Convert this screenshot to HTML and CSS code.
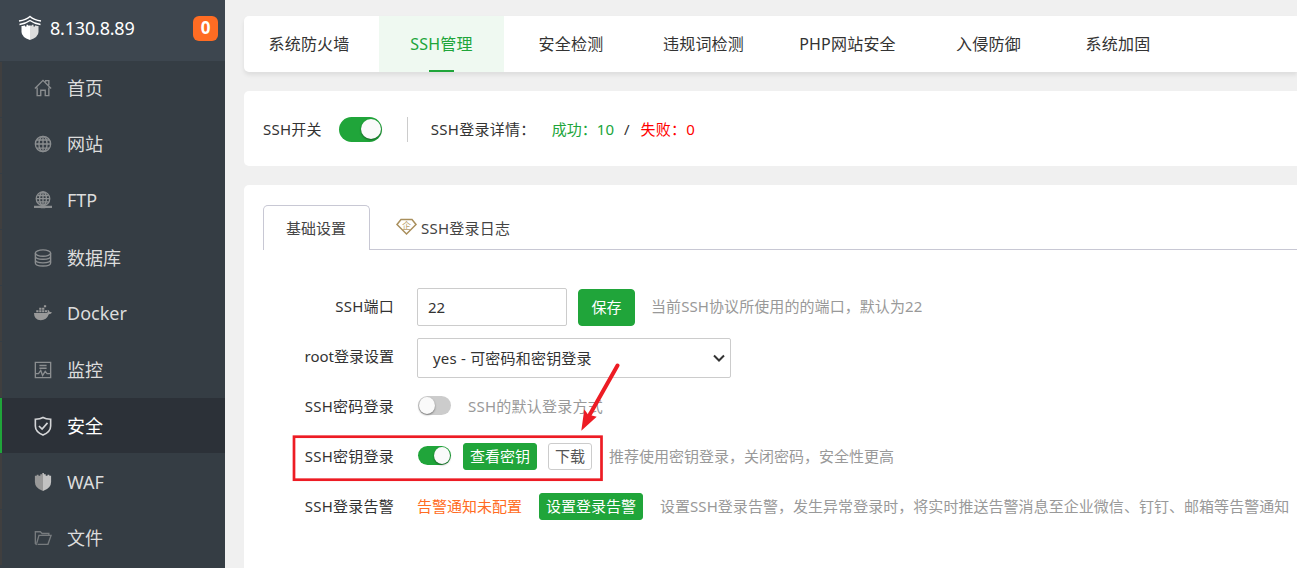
FILE: index.html
```html
<!DOCTYPE html>
<html lang="zh-CN">
<head>
    <meta charset="UTF-8">
    <meta name="viewport" content="width=device-width, initial-scale=1.0">
    <title>安全 - SSH管理</title>
    <link rel="stylesheet" href="styles.css">
</head>
<body>
    <div class="sidebar">
        <div class="server">
            <svg class="logo" width="24" height="26" viewBox="0 0 24 26">
                <path d="M1 6Q8 5 12 1.500Q16 5 23 6M1.500 9.500Q8 8.500 12 5.500Q16 8.500 22.500 9.500" fill="none" stroke="#fff" stroke-width="1.400"/>
                <path d="M3.500 11H5.500V10.500H7V11.500H8.500V9.800H10V10.500H12V25Q3.500 22 3.500 17Z" fill="#fff"/>
                <path d="M20.500 11H18.500V10.500H17V11.500H15.500V9.800H14V10.500H12V25Q20.500 22 20.500 17Z" fill="#ddd"/>
            </svg>
            <span class="ip">8.130.8.89</span>
            <span class="count">0</span>
        </div>
        <ul class="menu">
            <li class="up">
                <svg viewBox="0 0 20 20"><path d="M1 10.500L10 1.500L19 10.500M3.500 9.500V18.500H7.500V12.500H12.500V18.500H16.500V9.500M13 3V1.800H16.500V7"/></svg>
                首页
            </li>
            <li class="up">
                <svg viewBox="0 0 20 20"><circle cx="10" cy="10" r="8.500"/><ellipse cx="10" cy="10" rx="4.500" ry="8.500"/><path d="M10 1.500V18.500M1.500 10H18.500M3 5.500H17M3 14.500H17"/></svg>
                网站
            </li>
            <li class="up">
                <svg viewBox="0 0 20 20"><circle cx="10" cy="8.500" r="7.500"/><ellipse cx="10" cy="8.500" rx="3.800" ry="7.500"/><path d="M10 1V18M2.500 8.500H17.500M4 5H16M4 12H16"/><path d="M0 17.500H20M7.500 18H12.500" stroke-width="2.500"/></svg>
                FTP
            </li>
            <li>
                <svg viewBox="0 0 20 20"><ellipse cx="10" cy="4.500" rx="8.500" ry="3.500"/><path d="M1.500 4.500V15.500C1.500 20 18.500 20 18.500 15.500V4.500M1.500 8C1.500 12.500 18.500 12.500 18.500 8M1.500 12C1.500 16.500 18.500 16.500 18.500 12"/></svg>
                数据库
            </li>
            <li class="docker">
                <svg viewBox="0 0 20 20"><path class="solid" d="M0 10H14.500Q16 9 15 6.500Q17 7 17.500 9Q19 8.500 20 9.500Q19 11.500 16.500 11.500Q14 18 7.500 18Q0 18 0 10ZM2.500 7H5V9.300H2.500ZM5.800 7H8.300V9.300H5.800ZM9 7H11.500V9.300H9ZM12.200 7H14.500V9.300H12.200ZM5.800 4.200H8.300V6.300H5.800ZM9 4.200H11.500V6.300H9ZM11 1.500H13.500V3.500H11Z"/></svg>
                Docker
            </li>
            <li>
                <svg viewBox="0 0 20 20"><path d="M1.500 1.500H18.500V18.500H1.500ZM6 5H14M6 8H14M2 14H5L7.500 10.500L9.500 16L12.500 11.500L14.500 14H18"/></svg>
                监控
            </li>
            <li class="active">
                <svg viewBox="0 0 20 20"><path d="M10 0.500Q13 2.200 18.500 2.500V10Q18.500 16.500 10 20Q1.500 16.500 1.500 10V2.500Q7 2.200 10 0.500ZM5.500 10L9 13.500L15 6.500"/></svg>
                安全
            </li>
            <li>
                <svg viewBox="0 0 20 20"><path class="solid" d="M10 0V20Q1 17 1 10V3H3V2H5V3H7V1.500H9V0Z"/><path class="light" d="M10 0V20Q19 17 19 10V3H17V2H15V3H13V1.500H11V0Z"/></svg>
                WAF
            </li>
            <li>
                <svg class="thin" viewBox="0 0 20 20"><path d="M4 17H15.500L19 7H5.500L3 16M3 17.500L1.500 16V3H7L9 5H16.500V7"/></svg>
                文件
            </li>
        </ul>
    </div>

    <div class="main">
        <div class="tabs">
            <div class="tab tab-firewall">系统防火墙</div>
            <div class="tab tab-ssh on">SSH管理</div>
            <div class="tab tab-check">安全检测</div>
            <div class="tab tab-words">违规词检测</div>
            <div class="tab tab-php">PHP网站安全</div>
            <div class="tab tab-intrusion">入侵防御</div>
            <div class="tab tab-harden">系统加固</div>
        </div>

        <div class="panel status">
            <span class="spaced">SSH开关</span>
            <span class="switch big checked"></span>
            <span class="divider"></span>
            <span class="detail spaced">SSH登录详情：</span>
            <span class="success">成功：10</span>
            <span class="slash">/</span>
            <span class="fail">失败：0</span>
        </div>

        <div class="panel settings">
            <div class="sub-tabs">
                <div class="sub-tab current">基础设置</div>
                <div class="sub-tab">
                    <svg class="gem" width="21" height="18" viewBox="0 0 21 18">
                        <path d="M5 1.500H16L20 6.500L10.500 16L1 6.500Z" fill="none" stroke="#a98f5c" stroke-width="1.500"/>
                        <text x="10.500" y="10.500" text-anchor="middle">企</text>
                    </svg>
                    <span class="spaced">SSH登录日志</span>
                </div>
            </div>

            <div class="form">
                <div class="row row-port">
                    <label class="spaced">SSH端口</label>
                    <input class="port" type="text" value="22">
                    <button class="btn save">保存</button>
                    <span class="help">当前SSH协议所使用的的端口，默认为22</span>
                </div>
                <div class="row">
                    <label>root登录设置</label>
                    <div class="select">
                        <span class="value">yes - 可密码和密钥登录</span>
                        <svg width="12" height="8" viewBox="0 0 12 8"><path d="M1 1.500L6 6.500L11 1.500" fill="none" stroke="#333" stroke-width="2"/></svg>
                    </div>
                </div>
                <div class="row">
                    <label class="spaced">SSH密码登录</label>
                    <span class="switch"></span>
                    <span class="help spaced">SSH的默认登录方式</span>
                </div>
                <div class="row">
                    <label class="spaced">SSH密钥登录</label>
                    <span class="switch checked"></span>
                    <button class="btn small view">查看密钥</button>
                    <button class="btn small plain">下载</button>
                    <span class="help">推荐使用密钥登录，关闭密码，安全性更高</span>
                </div>
                <div class="row">
                    <label class="spaced">SSH登录告警</label>
                    <span class="warn">告警通知未配置</span>
                    <button class="btn small alarm">设置登录告警</button>
                    <span class="help long">设置SSH登录告警，发生异常登录时，将实时推送告警消息至企业微信、钉钉、邮箱等告警通知</span>
                </div>
            </div>
        </div>
    </div>

    <!-- highlight box and arrow -->
    <svg class="mark" width="330" height="130" viewBox="0 0 330 130">
        <rect x="4" y="76.700" width="307.500" height="43" fill="none" stroke="#ed1c24" stroke-width="2.700"/>
        <path d="M327.500 5.500L299 56" stroke="#ed1c24" stroke-width="4" stroke-linecap="round"/>
        <path d="M291.300 70.700L294.300 49.300L298 54.500L306.700 56.700Z" fill="#ed1c24"/>
    </svg>
</body>
</html>
```
FILE: styles.css
```css
* {
    box-sizing: border-box;
}
body {
    margin: 0;
    width: 1297px;
    height: 568px;
    overflow: hidden;
    display: flex;
    position: relative;
    background: #f0f0f0;
    color: #333;
    font-family: "Noto Sans", "Noto Sans CJK SC", sans-serif;
    font-size: 15px;
    line-height: 20px;
    white-space: nowrap;
}
.sidebar {
    width: 225px;
    height: 568px;
    flex: none;
    overflow: hidden;
    background: #353d44;
}
.server {
    display: flex;
    align-items: center;
    height: 61px;
    padding: 0 7px 5px 18px;
    background: #3d464f;
    color: #fff;
    font-size: 18px;
}
.ip {
    margin-left: 8px;
    letter-spacing: -0.2px;
}
.count {
    width: 25px;
    height: 25px;
    margin-left: auto;
    border-radius: 6px;
    background: #ff6c23;
    font-weight: bold;
    font-size: 17px;
    line-height: 24px;
    text-align: center;
}
.menu {
    list-style: none;
    margin: 0;
    padding: 0;
}
.menu li {
    display: flex;
    align-items: center;
    gap: 14px;
    height: 55px;
    margin-bottom: 1px;
    padding-left: 31px;
    border-left: 2px solid #403f3f;
    color: #dcdcdc;
    font-size: 18px;
}
.menu li:first-child {
    margin-top: 1px;
}
.menu li.up {
    padding-bottom: 3px;
}
.menu li.docker {
    padding-bottom: 2px;
}
.menu li.active {
    border-left-color: #20a53a;
    background: #2c3138;
    color: #fff;
}
.menu svg {
    width: 20px;
    height: 20px;
    padding: 0 1px;
    fill: none;
    stroke: #8b8e90;
    stroke-width: 1.5;
}
.menu .active svg {
    stroke: #d5d6d8;
    stroke-width: 1.8;
}
.menu .thin {
    stroke: #777b7e;
}
.menu .solid {
    fill: #999;
    stroke: none;
}
.menu .light {
    fill: #c2c2c2;
    stroke: none;
}
.main {
    width: 1072px;
    flex: none;
    padding: 16px 0 0 19px;
}
.tabs {
    display: flex;
    height: 56px;
    border-radius: 5px 0 0 5px;
    background: #fff;
    box-shadow: 0 3px 4px rgba(0, 0, 0, 0.08);
    font-size: 16px;
    line-height: 56px;
    letter-spacing: 0.2px;
    text-align: center;
}
.tab-firewall {
    width: 135px;
    padding-right: 5px;
}
.tab-ssh {
    width: 125px;
}
.tab-check {
    width: 135px;
    padding-right: 1px;
}
.tab-words {
    width: 129px;
}
.tab-php {
    width: 160px;
    padding-right: 1px;
}
.tab-intrusion {
    width: 121px;
}
.tab-harden {
    width: 138px;
}
.tab.on {
    position: relative;
    background: #eff9f1;
    color: #20a53a;
}
.tab.on::after {
    content: "";
    position: absolute;
    left: 50px;
    bottom: 0;
    width: 25px;
    height: 2px;
    background: #20a53a;
}
.panel {
    margin-top: 19px;
    border-radius: 5px 0 0 5px;
    background: #fff;
}
.spaced {
    letter-spacing: 0.25px;
}
.status {
    display: flex;
    align-items: center;
    height: 75px;
    padding: 0 0 0 19px;
}
.switch {
    display: block;
    width: 33px;
    height: 19px;
    margin: 0 0 1px 1px;
    flex: none;
    border-radius: 10px;
    background: #ccc;
}
.switch::after {
    content: "";
    display: block;
    width: 16px;
    height: 17px;
    margin: 1px;
    border-radius: 50%;
    background: #fafafa;
    box-shadow: 0 1px 2px rgba(0, 0, 0, 0.45);
}
.switch.checked {
    background: #20a53a;
}
.switch.checked::after {
    margin-left: 16px;
}
.switch.big {
    width: 43px;
    height: 25px;
    margin: 2px 0 0 17px;
    border-radius: 13px;
}
.switch.big::after {
    width: 20px;
    height: 20px;
    margin: 2px 0 0 22px;
}
.divider {
    width: 1px;
    height: 25px;
    margin: 2px 23px 0 25px;
    background: #ccc;
}
.detail {
    width: 121px;
}
.success {
    color: #20a53a;
}
.slash {
    margin: 0 11px 0 10px;
}
.fail {
    color: #f00;
    letter-spacing: 0.2px;
}
.settings {
    height: 400px;
    padding: 20px 0 0 19px;
}
.sub-tabs {
    display: flex;
    height: 45px;
    border-bottom: 1px solid #c8c8d4;
    color: #444;
    line-height: 46px;
}
.sub-tab {
    display: flex;
    align-items: center;
    height: 45px;
    padding-left: 26px;
}
.sub-tab.current {
    width: 107px;
    padding-left: 22px;
    border: 1px solid #c8c8d4;
    border-bottom: 0;
    border-radius: 5px 5px 0 0;
    background: #fff;
}
.gem {
    margin: 0 4px 2px 0;
}
.gem text {
    fill: #b89f6c;
    font-size: 9px;
}
.form {
    padding-top: 36px;
}
.row {
    display: flex;
    align-items: center;
    height: 40px;
    margin-bottom: 10px;
}
.row label {
    width: 131px;
    margin-right: 23px;
    text-align: right;
}
.port {
    width: 150px;
    height: 38px;
    margin-top: 2px;
    padding: 0 10px;
    border: 1px solid #ccc;
    border-radius: 2px;
    color: #333;
    font: inherit;
}
.select {
    display: flex;
    align-items: center;
    justify-content: space-between;
    width: 314px;
    height: 40px;
    margin-top: 4px;
    padding: 0 5px 0 15px;
    border: 1px solid #ccc;
    border-radius: 2px;
}
.value {
    letter-spacing: 0.2px;
}
.help {
    margin-left: 17px;
    color: #999;
}
.row-port .help {
    margin-left: 16px;
    letter-spacing: 0.08px;
}
.help.long {
    letter-spacing: 0.04px;
}
.btn {
    padding: 0;
    border: 1px solid #20a53a;
    border-radius: 4px;
    background: #20a53a;
    color: #fff;
    font: inherit;
}
.save {
    width: 57px;
    height: 37px;
    margin: 2px 0 0 11px;
}
.small {
    height: 27px;
    border-radius: 3px;
}
.view {
    width: 74px;
    margin-left: 12px;
}
.plain {
    width: 44px;
    margin-left: 11px;
    border-color: #ccc;
    background: #fff;
    color: #555;
}
.warn {
    color: #ff6c23;
}
.alarm {
    width: 104px;
    margin-left: 17px;
}
.mark {
    position: absolute;
    left: 290px;
    top: 360px;
}
```
